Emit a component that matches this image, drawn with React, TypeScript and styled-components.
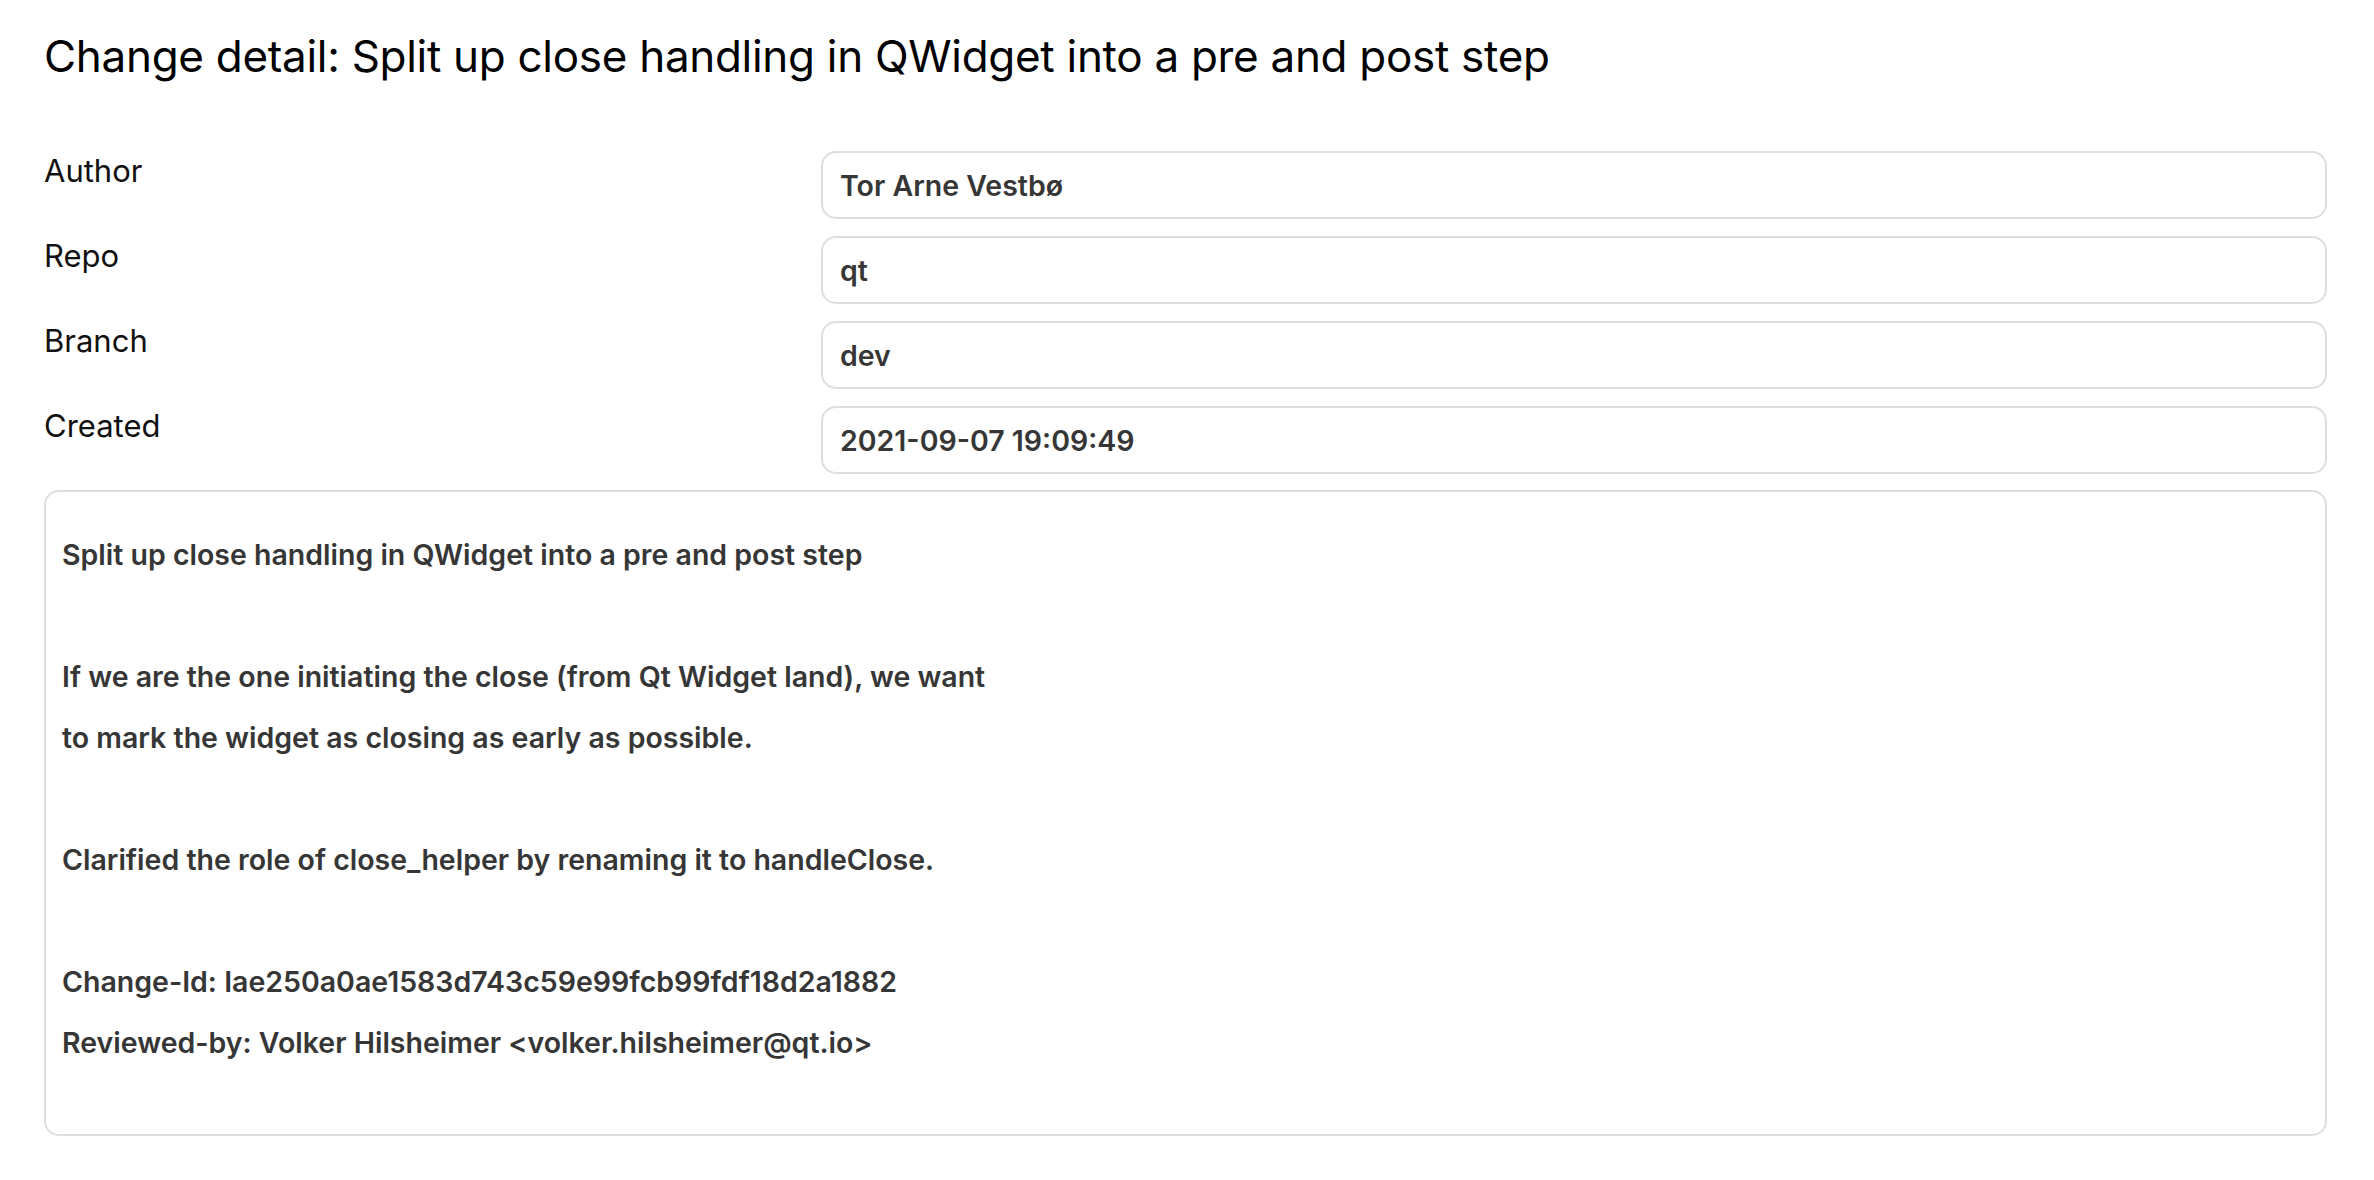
import React from "react";
import styled, { createGlobalStyle } from "styled-components";

const GlobalStyle = createGlobalStyle`
  html, body {
    margin: 0;
    padding: 0;
    background: #ffffff;
  }
  body {
    font-family: Inter, "Noto Sans", "Liberation Sans", sans-serif;
    -webkit-font-smoothing: antialiased;
  }
`;

const Page = styled.main`
  padding: 28px 47px 40px 44px;
  display: flex;
  flex-direction: column;
`;

const Title = styled.h1`
  margin: 0 0 66px;
  font-size: 44px;
  font-weight: 400;
  line-height: 57px;
  color: #000;
  letter-spacing: -0.3px;
`;

const Fields = styled.div`
  display: grid;
  grid-template-columns: 777px 1fr;
  row-gap: 17px;
`;

const Label = styled.div`
  font-size: 31px;
  font-weight: 400;
  line-height: 40px;
  color: #111;
`;

const Value = styled.div`
  height: 68px;
  box-sizing: border-box;
  border: 2px solid #dedede;
  border-radius: 15px;
  padding: 0 17px;
  display: flex;
  align-items: center;
  font-size: 28.5px;
  font-weight: 600;
  color: #363636;
`;

const Description = styled.div`
  margin-top: 16px;
  box-sizing: border-box;
  border: 2px solid #dedede;
  border-radius: 15px;
  padding: 32px 16px 0;
  font-size: 28.5px;
  font-weight: 600;
  line-height: 61px;
  color: #363636;
`;

const Line = styled.div`
  min-height: 61px;
  white-space: pre;
`;

const fields: [string, string][] = [
  ["Author", "Tor Arne Vestbø"],
  ["Repo", "qt"],
  ["Branch", "dev"],
  ["Created", "2021-09-07 19:09:49"],
];

const message = [
  "Split up close handling in QWidget into a pre and post step",
  "",
  "If we are the one initiating the close (from Qt Widget land), we want",
  "to mark the widget as closing as early as possible.",
  "",
  "Clarified the role of close_helper by renaming it to handleClose.",
  "",
  "Change-Id: Iae250a0ae1583d743c59e99fcb99fdf18d2a1882",
  "Reviewed-by: Volker Hilsheimer <volker.hilsheimer@qt.io>",
  "",
];

export default function App() {
  return (
    <>
      <GlobalStyle />
      <Page>
        <Title>Change detail: Split up close handling in QWidget into a pre and post step</Title>
        <Fields>
          {fields.map(([label, value]) => (
            <React.Fragment key={label}>
              <Label>{label}</Label>
              <Value>{value}</Value>
            </React.Fragment>
          ))}
        </Fields>
        <Description>
          {message.map((line, i) => (
            <Line key={i}>{line}</Line>
          ))}
        </Description>
      </Page>
    </>
  );
}
